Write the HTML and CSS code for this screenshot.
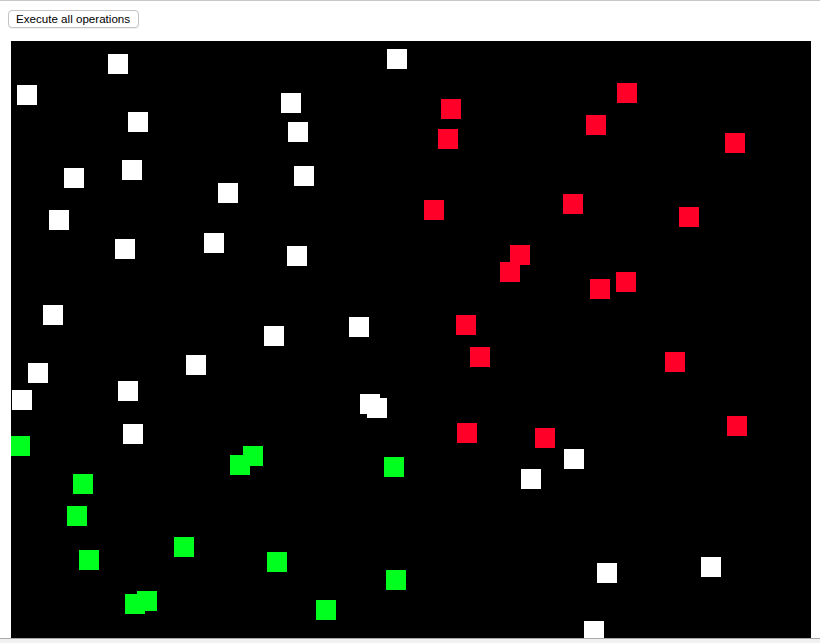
FILE: index.html
```html
<!DOCTYPE html>
<html>
<head>
<meta charset="utf-8">
<link rel="stylesheet" href="styles.css">
</head>
<body>
<div class="page">
  <button class="exec-btn" type="button">Execute all operations</button>
  <div class="canvas">
    <div class="sq white" style="left:97px;top:13px"></div>
    <div class="sq white" style="left:6px;top:44px"></div>
    <div class="sq white" style="left:117px;top:71px"></div>
    <div class="sq white" style="left:111px;top:119px"></div>
    <div class="sq white" style="left:53px;top:127px"></div>
    <div class="sq white" style="left:207px;top:142px"></div>
    <div class="sq white" style="left:38px;top:169px"></div>
    <div class="sq white" style="left:104px;top:198px"></div>
    <div class="sq white" style="left:193px;top:192px"></div>
    <div class="sq white" style="left:32px;top:264px"></div>
    <div class="sq white" style="left:253px;top:285px"></div>
    <div class="sq white" style="left:376px;top:8px"></div>
    <div class="sq white" style="left:270px;top:52px"></div>
    <div class="sq white" style="left:277px;top:81px"></div>
    <div class="sq white" style="left:283px;top:125px"></div>
    <div class="sq white" style="left:276px;top:205px"></div>
    <div class="sq white" style="left:338px;top:276px"></div>
    <div class="sq white" style="left:175px;top:314px"></div>
    <div class="sq white" style="left:17px;top:322px"></div>
    <div class="sq white" style="left:107px;top:340px"></div>
    <div class="sq white" style="left:1px;top:349px"></div>
    <div class="sq white" style="left:112px;top:383px"></div>
    <div class="sq white" style="left:349px;top:353px"></div>
    <div class="sq white" style="left:356px;top:357px"></div>
    <div class="sq white" style="left:510px;top:428px"></div>
    <div class="sq white" style="left:553px;top:408px"></div>
    <div class="sq white" style="left:586px;top:522px"></div>
    <div class="sq white" style="left:690px;top:516px"></div>
    <div class="sq white" style="left:573px;top:580px"></div>

    <div class="sq red" style="left:430px;top:58px"></div>
    <div class="sq red" style="left:427px;top:88px"></div>
    <div class="sq red" style="left:413px;top:159px"></div>
    <div class="sq red" style="left:499px;top:204px"></div>
    <div class="sq red" style="left:489px;top:221px"></div>
    <div class="sq red" style="left:445px;top:274px"></div>
    <div class="sq red" style="left:606px;top:42px"></div>
    <div class="sq red" style="left:575px;top:74px"></div>
    <div class="sq red" style="left:714px;top:92px"></div>
    <div class="sq red" style="left:552px;top:153px"></div>
    <div class="sq red" style="left:668px;top:166px"></div>
    <div class="sq red" style="left:579px;top:238px"></div>
    <div class="sq red" style="left:605px;top:231px"></div>
    <div class="sq red" style="left:459px;top:306px"></div>
    <div class="sq red" style="left:446px;top:382px"></div>
    <div class="sq red" style="left:524px;top:387px"></div>
    <div class="sq red" style="left:654px;top:311px"></div>
    <div class="sq red" style="left:716px;top:375px"></div>

    <div class="sq green" style="left:-1px;top:395px"></div>
    <div class="sq green" style="left:232px;top:405px"></div>
    <div class="sq green" style="left:219px;top:414px"></div>
    <div class="sq green" style="left:62px;top:433px"></div>
    <div class="sq green" style="left:56px;top:465px"></div>
    <div class="sq green" style="left:68px;top:509px"></div>
    <div class="sq green" style="left:163px;top:496px"></div>
    <div class="sq green" style="left:256px;top:511px"></div>
    <div class="sq green" style="left:126px;top:550px"></div>
    <div class="sq green" style="left:114px;top:553px"></div>
    <div class="sq green" style="left:373px;top:416px"></div>
    <div class="sq green" style="left:375px;top:529px"></div>
    <div class="sq green" style="left:305px;top:559px"></div>
  </div>
</div>
<div class="hscroll"></div>
</body>
</html>
```

FILE: styles.css
```css
html, body {
  margin: 0;
  padding: 0;
  background: #ffffff;
  overflow: hidden;
}

body {
  border-top: 1px solid #c8c8c8;
  font-family: "Liberation Sans", Arial, sans-serif;
}

.page {
  display: flex;
  flex-direction: column;
  align-items: flex-start;
  padding: 9px 0 0 8px;
}

.exec-btn {
  height: 18px;
  padding: 0 8px 0 7px;
  font-family: "Liberation Sans", Arial, sans-serif;
  font-size: 11.6px;
  line-height: 16px;
  color: #000;
  background: #ffffff;
  border: 1px solid #c4c4c4;
  border-radius: 4px;
  box-shadow: 0 1px 1px rgba(0, 0, 0, 0.06);
}

.canvas {
  position: relative;
  width: 800px;
  height: 600px;
  margin: 13px 0 0 3px;
  background: #000000;
  overflow: hidden;
}

.sq {
  position: absolute;
  width: 20px;
  height: 20px;
}

.white { background: #ffffff; }
.red { background: #ff0028; }
.green { background: #00ff1e; }

.hscroll {
  position: fixed;
  left: 0;
  right: 0;
  bottom: 0;
  height: 4px;
  background: #f1f1f1;
  border-top: 1px solid #a8a8a8;
}
```
